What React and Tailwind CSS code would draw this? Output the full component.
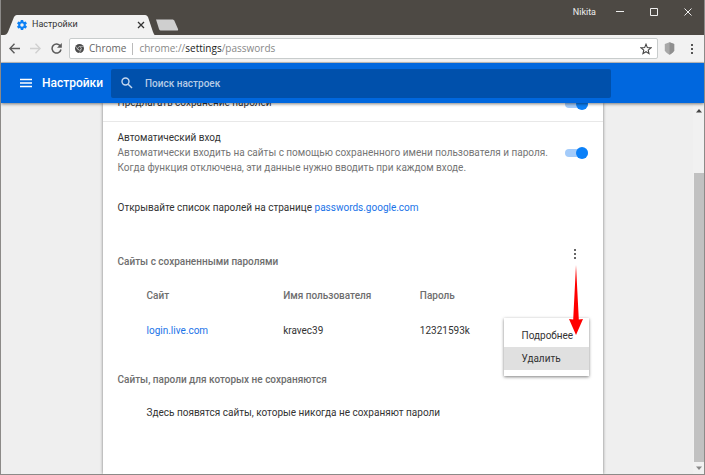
import React, { useState } from 'react';

const passwords = [{ site: 'login.live.com', user: 'kravec39', password: '12321593k' }];

const GearIcon = () => (
  <svg viewBox="0 0 24 24" className="h-3 w-3 shrink-0" fill="#0b80f5">
    <path d="M19.4 13c.04-.3.06-.6.06-1s-.02-.7-.06-1l2.1-1.65c.2-.15.25-.42.12-.64l-2-3.46c-.12-.22-.38-.3-.6-.22l-2.5 1c-.52-.4-1.08-.73-1.7-.98l-.37-2.65A.5.5 0 0 0 14 2h-4c-.25 0-.46.18-.5.42l-.37 2.65c-.6.25-1.17.58-1.69.98l-2.5-1c-.22-.08-.48 0-.6.22l-2 3.46c-.13.22-.07.49.12.64L4.57 11c-.04.3-.07.66-.07 1s.03.7.07 1l-2.11 1.65c-.19.15-.25.42-.12.64l2 3.46c.12.22.38.3.6.22l2.5-1c.52.4 1.08.73 1.69.98l.37 2.65c.04.24.25.42.5.42h4c.25 0 .46-.18.5-.42l.37-2.65c.61-.25 1.17-.58 1.69-.98l2.5 1c.22.08.48 0 .6-.22l2-3.46c.12-.22.07-.49-.12-.64L19.4 13zM12 15.5a3.5 3.5 0 1 1 0-7 3.5 3.5 0 0 1 0 7z" />
  </svg>
);

const ChromeIcon = () => (
  <svg viewBox="0 0 24 24" className="h-[9px] w-[9px] shrink-0">
    <circle cx="12" cy="12" r="12" fill="#4a4a4a" />
    <path d="M12 6.5h10.5M7.2 14.8 2 6M16.8 14.8 11.5 24" stroke="#fff" strokeWidth="1.2" />
    <circle cx="12" cy="12" r="5.2" fill="#fff" />
    <circle cx="12" cy="12" r="3.8" fill="#4a4a4a" />
  </svg>
);

const DotsIcon = ({ className }) => (
  <svg viewBox="0 0 4 12" className={className} fill="currentColor">
    <rect x="1" y="1" width="2" height="2" />
    <rect x="1" y="5" width="2" height="2" />
    <rect x="1" y="9" width="2" height="2" />
  </svg>
);

const Toggle = ({ label, checked, onChange }) => (
  <label className="relative block h-3 w-6 shrink-0 cursor-pointer">
    <input type="checkbox" aria-label={label} checked={checked} onChange={onChange} className="peer absolute inset-0 h-full w-full cursor-pointer opacity-0" />
    <span className="pointer-events-none absolute right-0 left-px top-[2px] h-2 rounded-full bg-gray-300 peer-checked:bg-[#a3cbfa]" />
    <span className="pointer-events-none absolute top-0 left-0 h-3 w-3 rounded-full bg-gray-500 peer-checked:left-3 peer-checked:bg-[#0b80f8]" />
  </label>
);

const TitleBar = () => (
  <div className="relative flex h-[35px] items-end justify-between bg-[#4d4944]">
    <div className="flex items-end pl-[3px]">
      <div className="relative flex h-5 w-[151px] items-center justify-between pr-[10px] pl-3">
        <svg viewBox="0 0 151 20" preserveAspectRatio="none" className="absolute inset-0 h-full w-full" fill="#f2f2f2">
          <path d="M0 20c2 0 3-1 4-3l6-15c1-1 1-2 3-2h128c2 0 2 1 3 2l5 15c1 2 1 3 2 3z" />
        </svg>
        <div className="relative flex items-center gap-1">
          <GearIcon />
          <span className="font-[Roboto,sans-serif] text-[9px] text-[#333]">Настройки</span>
        </div>
        <button aria-label="Закрыть вкладку" className="relative">
          <svg viewBox="0 0 8 8" className="h-2 w-2" stroke="#333" strokeWidth="1.3">
            <path d="M1 1l6 6M7 1 1 7" />
          </svg>
        </button>
      </div>
      <button aria-label="Новая вкладка" className="mb-1">
        <svg viewBox="0 0 24 12" className="h-3 w-6" fill="#cfcfcf">
          <path d="M1 .5h16c1.500 0 2 .5 2.500 1.500l3.500 8c.4 1 0 1.500-1 1.500H6.500c-1.500 0-2-.5-2.500-1.500z" />
        </svg>
      </button>
    </div>
    <div className="flex h-full items-start pt-1 pr-3 text-[#eee]">
      <span className="mr-5 font-[Roboto,sans-serif] text-[9px] leading-4">Nikita</span>
      <div className="flex gap-[26px]">
        <button aria-label="Свернуть" className="flex h-4 w-2 items-center">
          <svg viewBox="0 0 8 8" className="h-2 w-2" stroke="currentColor"><path d="M0 3.500h8" /></svg>
        </button>
        <button aria-label="Развернуть" className="flex h-4 w-2 items-center">
          <svg viewBox="0 0 8 8" className="h-2 w-2" fill="none" stroke="currentColor"><path d="M.5.5h7v7h-7z" /></svg>
        </button>
        <button aria-label="Закрыть" className="flex h-4 w-2 items-center">
          <svg viewBox="0 0 8 8" className="h-2 w-2" stroke="currentColor"><path d="M.5.5l7 7M7.500.5l-7 7" /></svg>
        </button>
      </div>
    </div>
  </div>
);

const Toolbar = () => (
  <div className="flex h-7 items-center border-b border-[#c4c4c4] bg-[#f2f2f2] pr-[10px] pl-2">
    <div className="flex w-[60px] items-center gap-[10px] text-[#5a5a5a]">
      <button aria-label="Назад">
        <svg viewBox="0 0 11 11" className="h-[11px] w-[11px]" fill="none" stroke="currentColor" strokeWidth="1.4"><path d="M11 5.500H1M5.500.8.9 5.500l4.600 4.700" /></svg>
      </button>
      <button aria-label="Вперёд" className="text-[#d0d0d0]">
        <svg viewBox="0 0 11 11" className="h-[11px] w-[11px]" fill="none" stroke="currentColor" strokeWidth="1.4"><path d="M0 5.500h10M5.500.8l4.600 4.700-4.600 4.700" /></svg>
      </button>
      <button aria-label="Обновить">
        <svg viewBox="0 0 11 11" className="h-[11px] w-[11px]" fill="none" stroke="currentColor" strokeWidth="1.5">
          <path d="M9.300 3A4.500 4.500 0 1 0 10 6.500" />
          <path d="M10.800 0v4.700H6z" fill="currentColor" stroke="none" />
        </svg>
      </button>
    </div>
    <div className="flex h-[21px] flex-1 items-center rounded-xs border border-[#c8cccc] bg-white px-[5px]">
      <ChromeIcon />
      <span className="ml-[5px] text-[10px] text-[#666]">Chrome</span>
      <span className="mx-[6px] h-3 w-px bg-[#bbb]" />
      <span className="flex-1 text-[10px] text-[#888]">chrome://<span className="text-[#222]">settings</span>/passwords</span>
      <button aria-label="Добавить в закладки" className="text-[#444]">
        <svg viewBox="0 0 24 24" className="h-3 w-3" fill="none" stroke="currentColor" strokeWidth="2.200">
          <path d="M12 2.500l2.700 6.700 7.200.5-5.500 4.600 1.700 7L12 17.500l-6.100 3.800 1.700-7-5.500-4.600 7.200-.5z" />
        </svg>
      </button>
    </div>
    <button aria-label="Расширение" className="mx-[6px]">
      <svg viewBox="0 0 11 13" className="h-[13px] w-[11px]">
        <path d="M5.500.3 10.200 2v6.500c-1 2-3 3.500-4.700 4.200C3.800 12 1.800 10.500.8 8.500V2z" fill="#a8a8a8" />
        <path d="M5.500.3 10.200 2v6.500c-1 2-3 3.500-4.700 4.200z" fill="#8f8f8f" />
      </svg>
    </button>
    <button aria-label="Меню" className="ml-[9px] text-[#555]"><DotsIcon className="h-3 w-1" /></button>
  </div>
);

const Header = () => (
  <header className="relative z-10 flex h-10 items-center bg-[#0067de] text-white shadow-[0_1px_3px_rgba(0,0,0,0.5)]">
    <div className="flex w-[110px] shrink-0 items-center gap-[10px] pl-[19px]">
      <button aria-label="Главное меню">
        <svg viewBox="0 0 12 10" className="h-[10px] w-3" stroke="currentColor" strokeWidth="1.500"><path d="M0 1.500h12M0 5h12M0 8.500h12" /></svg>
      </button>
      <h1 className="text-xs font-medium">Настройки</h1>
    </div>
    <label className="flex h-[29px] w-full max-w-[500px] items-center gap-3 rounded-xs bg-[#0050ab] px-[10px]">
      <svg viewBox="0 0 12 12" className="h-3 w-3 shrink-0" fill="none" stroke="#c5d8ef" strokeWidth="1.400">
        <circle cx="4.500" cy="4.500" r="3.500" />
        <path d="M7.200 7.200 11 11" />
      </svg>
      <input type="text" aria-label="Поиск настроек" placeholder="Поиск настроек" className="w-full bg-transparent text-[10px] font-medium outline-none placeholder:text-[#b5cbe6]" />
    </label>
  </header>
);

const PasswordMenu = () => (
  <div className="absolute top-[-5px] right-[14px] z-10 flex w-[85px] flex-col bg-white py-[6px] shadow-[0_1px_3px_rgba(0,0,0,0.5)]">
    <button className="h-[23px] pl-[18px] text-left">Подробнее</button>
    <button className="h-[23px] bg-[#e0e0e0] pl-[18px] text-left">Удалить</button>
  </div>
);

const Arrow = () => (
  <svg viewBox="0 0 14 70" className="pointer-events-none absolute top-[-23px] right-[20px] z-20 h-[70px] w-[14px]" fill="#f00">
    <path d="M7 0l2.800 54.500 4.200-.5-7 16-7-16 4.200.5z" />
  </svg>
);

const Scrollbar = () => (
  <div className="flex w-[11px] flex-col items-center justify-self-end bg-[#f1f1f1]">
    <svg viewBox="0 0 6 4" className="mt-[6px] mb-[60px] h-1 w-[6px]" fill="#444"><path d="M0 3.500 3 0l3 3.500z" /></svg>
    <div className="w-[10px] flex-1 bg-[#c1c1c1]" />
    <svg viewBox="0 0 6 4" className="my-1 h-1 w-[6px]" fill="#888"><path d="M0 .5 3 4 6 .5z" /></svg>
  </div>
);

const App = () => {
  const [offer, setOffer] = useState(true);
  const [autoLogin, setAutoLogin] = useState(true);

  return (
    <div className="flex h-screen flex-col overflow-hidden border-x border-b border-[#8c8a88] bg-[#efefef] font-['Open_Sans',sans-serif]">
      <TitleBar />
      <Toolbar />
      <div className="flex min-h-0 flex-1 flex-col font-[Roboto,sans-serif] text-[10px] leading-[15px] text-[#333]">
        <Header />
        <main className="grid min-h-0 flex-1 grid-cols-[1fr_minmax(0,500px)_1fr]">
          <div />
          <div className="bg-white shadow-[0_0_3px_rgba(0,0,0,0.5)]">
            <div className="flex h-[19px] items-end justify-between border-b border-[#e8e8e8] px-[15px] pb-[11px]">
              <span>Предлагать сохранение паролей</span>
              <Toggle label="Предлагать сохранение паролей" checked={offer} onChange={() => setOffer(!offer)} />
            </div>
            <div className="flex items-center justify-between px-[15px] pt-2 pb-[25px]">
              <div>
                <p>Автоматический вход</p>
                <p className="text-[#757575]">Автоматически входить на сайты с помощью сохраненного имени пользователя и пароля.<br />Когда функция отключена, эти данные нужно вводить при каждом входе.</p>
              </div>
              <Toggle label="Автоматический вход" checked={autoLogin} onChange={() => setAutoLogin(!autoLogin)} />
            </div>
            <p className="px-[15px]">Открывайте список паролей на странице <a href="#passwords" className="text-[#1a73e8]">passwords.google.com</a></p>
            <div className="flex items-start justify-between px-[15px] pt-[33px]">
              <h2 className="pt-[6px] font-medium text-[#6e6e6e]">Сайты с сохраненными паролями</h2>
              <button aria-label="Другие действия" className="mr-[11px] text-[#666]"><DotsIcon className="h-3 w-1" /></button>
            </div>
            <div className="relative mt-[19px]">
              <table className="ml-11 w-[410px] table-fixed text-left">
                <thead>
                  <tr className="text-[#6e6e6e]">
                    <th className="pb-5 font-medium">Сайт</th>
                    <th className="pb-5 font-medium">Имя пользователя</th>
                    <th className="pb-5 font-medium">Пароль</th>
                  </tr>
                </thead>
                <tbody>
                  {passwords.map(p => (
                    <tr key={p.site}>
                      <td><a href="#site" className="text-[#1a73e8]">{p.site}</a></td>
                      <td>{p.user}</td>
                      <td>{p.password}</td>
                    </tr>
                  ))}
                </tbody>
              </table>
              <div className="absolute right-0 bottom-0 h-[15px]"><PasswordMenu /></div>
              <Arrow />
            </div>
            <h2 className="px-[15px] pt-[34px] font-medium text-[#6e6e6e]">Сайты, пароли для которых не сохраняются</h2>
            <p className="pt-[18px] pl-11">Здесь появятся сайты, которые никогда не сохраняют пароли</p>
          </div>
          <Scrollbar />
        </main>
      </div>
    </div>
  );
};
export default App;
